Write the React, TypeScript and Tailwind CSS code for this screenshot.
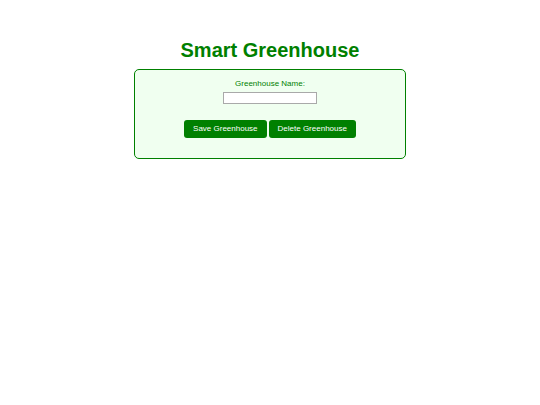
import React, { useState } from 'react';

export default function App() {
  const [name, setName] = useState('');

  return (
    <div className="min-h-[405px] w-full bg-white font-['Liberation_Sans',Arial,sans-serif] text-center">
      <div className="pt-[38px]">
        <h1 className="text-[20px] leading-[24px] font-bold text-[#008000] mb-[7px]">Smart Greenhouse</h1>

        {/* Greenhouse form card */}
        <div className="mx-auto w-[272px] rounded-[5px] border border-[#008000] bg-[#f0fff0] pt-[8px] pb-[20px]">
          <label className="block text-[8px] leading-[12px] text-[#008000]">Greenhouse Name:</label>
          <input
            type="text"
            value={name}
            onChange={(e) => setName(e.target.value)}
            className="mx-auto mt-[2px] block h-[12px] w-[94px] border border-[#a9a9a9] bg-white outline-none text-[8px]"
          />
          <div className="mt-[16px] flex justify-center gap-[2px]">
            <button
              type="button"
              className="h-[18px] px-[9px] rounded-[3px] bg-[#008000] text-white text-[8px] leading-[18px]"
            >
              Save Greenhouse
            </button>
            <button
              type="button"
              className="h-[18px] px-[9px] rounded-[3px] bg-[#008000] text-white text-[8px] leading-[18px]"
            >
              Delete Greenhouse
            </button>
          </div>
        </div>
      </div>
    </div>
  );
}
